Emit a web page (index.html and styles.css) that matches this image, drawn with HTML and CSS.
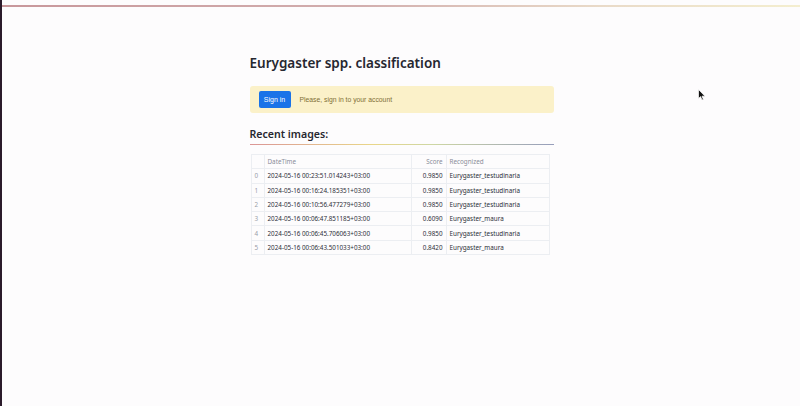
FILE: index.html
```html
<!DOCTYPE html>
<html>
<head>
<meta charset="utf-8">
<link rel="stylesheet" href="styles.css">
</head>
<body>
<div class="edge"></div>
<div class="app">
  <div class="decoration"></div>
  <main class="main">
    <h1 class="title">Eurygaster spp. classification</h1>
    <div class="alert">
      <button class="btn">Sign in</button>
      <span class="alert-text">Please, sign in to your account</span>
    </div>
    <h2 class="subtitle">Recent images:</h2>
    <div class="divider"></div>
    <table class="grid">
      <colgroup><col class="c-idx"><col class="c-dt"><col class="c-num"><col class="c-rec"></colgroup>
      <thead>
        <tr><th class="idx"></th><th>DateTime</th><th class="num">Score</th><th>Recognized</th></tr>
      </thead>
      <tbody>
        <tr><td class="idx">0</td><td>2024-05-16 00:23:51.014243+03:00</td><td class="num">0.9850</td><td>Eurygaster_testudinaria</td></tr>
        <tr><td class="idx">1</td><td>2024-05-16 00:16:24.185351+03:00</td><td class="num">0.9850</td><td>Eurygaster_testudinaria</td></tr>
        <tr><td class="idx">2</td><td>2024-05-16 00:10:56.477279+03:00</td><td class="num">0.9850</td><td>Eurygaster_testudinaria</td></tr>
        <tr><td class="idx">3</td><td>2024-05-16 00:06:47.851185+03:00</td><td class="num">0.6090</td><td>Eurygaster_maura</td></tr>
        <tr><td class="idx">4</td><td>2024-05-16 00:06:45.706063+03:00</td><td class="num">0.9850</td><td>Eurygaster_testudinaria</td></tr>
        <tr><td class="idx">5</td><td>2024-05-16 00:06:43.501033+03:00</td><td class="num">0.8420</td><td>Eurygaster_maura</td></tr>
      </tbody>
    </table>
  </main>
</div>
<svg class="cursor" width="8" height="12" viewBox="0 0 8 12"><path d="M0.5 0.5 L0.5 9.5 L2.6 7.6 L4 11 L5.4 10.4 L4 7.2 L7 7.2 Z" fill="#111" stroke="#fff" stroke-width="0.7"/></svg>
</body>
</html>
```
FILE: styles.css
```css
html, body {
  margin: 0;
  padding: 0;
  height: 100%;
}
body {
  display: flex;
  background: #fdfcfd;
  font-family: "Noto Sans", "Open Sans", sans-serif;
  color: #31333f;
  overflow: hidden;
}
.edge {
  width: 2px;
  flex: none;
  background: #2b1b2b;
}
.app {
  flex: 1;
  display: flex;
  flex-direction: column;
}
.decoration {
  height: 2px;
  margin-top: 5px;
  background: linear-gradient(90deg, #c8979b 0%, #d2aeae 45%, #e9dac8 75%, #f4eecf 100%);
}
.main {
  width: 304px;
  margin: 0 auto;
  padding-left: 1px;
}
.title {
  margin: 46px 0 0 0;
  font-size: 13.5px;
  line-height: 20px;
  font-weight: 600;
  color: #262730;
}
.alert {
  margin-top: 13px;
  height: 27px;
  box-sizing: border-box;
  background: #fbf1c9;
  border-radius: 3px;
  display: flex;
  align-items: center;
  padding-left: 9px;
  gap: 9px;
}
.btn {
  height: 17px;
  width: 32px;
  padding: 0;
  border: none;
  border-radius: 2px;
  background: #1a73e8;
  color: #fff;
  font-family: "Liberation Sans", Arial, sans-serif;
  font-size: 7px;
}
.alert-text {
  font-family: "Liberation Sans", Arial, sans-serif;
  font-size: 6.8px;
  color: #7f6f36;
}
.subtitle {
  margin: 13px 0 0 0;
  font-size: 10.6px;
  line-height: 16px;
  font-weight: 600;
  color: #262730;
}
.divider {
  margin-top: 2px;
  height: 1px;
  background: linear-gradient(90deg, #d78a8a 0%, #e7d27c 40%, #c9d39a 60%, #8b93b4 100%);
  opacity: 0.9;
}
.grid {
  margin: 9px 0 0 1px;
  width: 299px;
  border-collapse: collapse;
  font-size: 6.3px;
  table-layout: fixed;
}
.c-idx { width: 13px; }
.c-dt { width: 147px; }
.c-num { width: 35px; }
.grid th, .grid td {
  box-sizing: border-box;
  border: 1px solid #eceef2;
  height: 14.3px;
  padding: 0 3px;
  text-align: left;
  white-space: nowrap;
  overflow: hidden;
}
.grid th {
  font-weight: 400;
  color: #8a8d99;
}
.grid td {
  color: #2c2e38;
}
.grid .idx {
  color: #9a9ca8;
}
.grid .num { text-align: right; }
.cursor {
  position: absolute;
  left: 698px;
  top: 89px;
}
```
